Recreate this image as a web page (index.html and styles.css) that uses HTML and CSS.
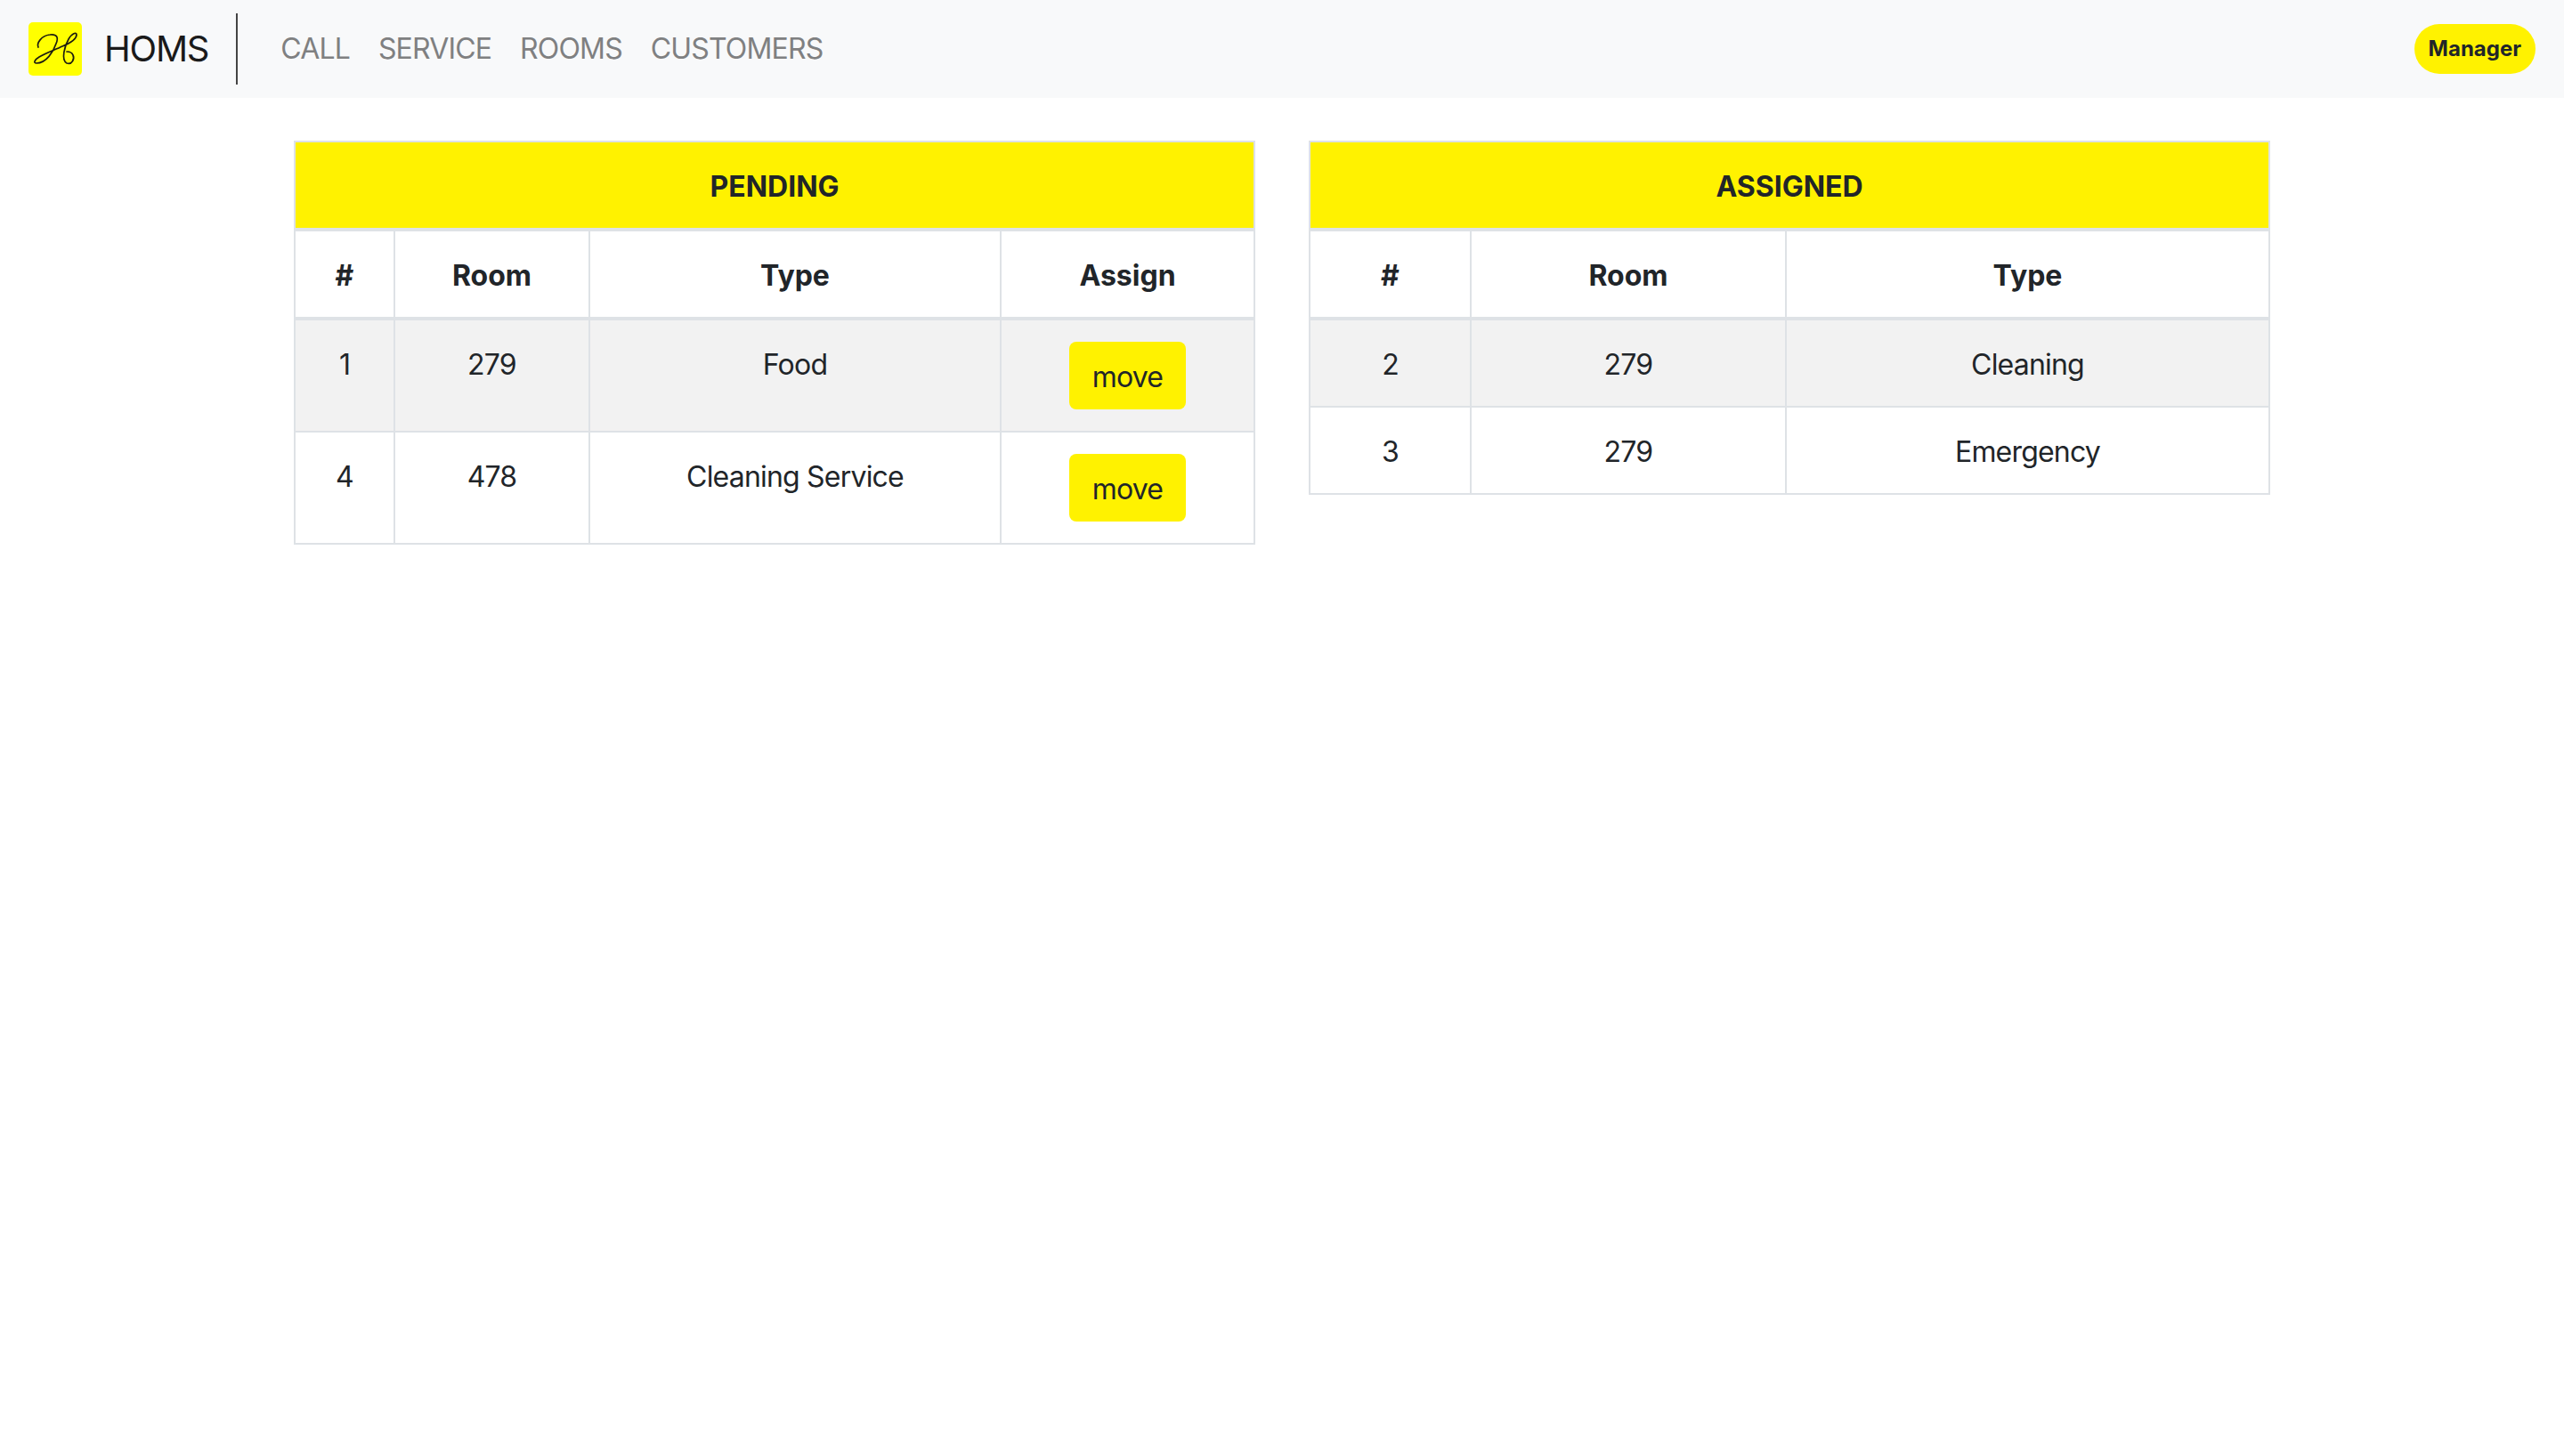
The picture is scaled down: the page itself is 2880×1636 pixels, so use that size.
FILE: index.html
```html
<!DOCTYPE html>
<html lang="en">
<head>
  <meta charset="UTF-8">
  <meta name="viewport" content="width=device-width, initial-scale=1.0">
  <title>HOMS</title>
  <link rel="stylesheet" href="styles.css">
</head>
<body>
  <nav class="navbar">
    <a class="brand" href="#">
      <svg class="logo" viewBox="0 0 60 60" aria-hidden="true">
        <rect width="60" height="60" rx="5" fill="#ffff00"/>
        <path d="M11 28C9 24 14 15 24 14C32 13 34 17 31 24C28 33 20 46 9 46C5 46 7 42 12 39C20 34 30 31 38 27C43 25 54 20 54 14C54 11 49 12 45 19C41 26 36 42 43 46C49 48 52 41 50 37C49 34 46 33 43 33" fill="none" stroke="#1c1c10" stroke-width="1.7" stroke-linecap="round"/>
      </svg>
      <span class="brand-name">HOMS</span>
    </a>
    <div class="nav-links">
      <a href="#">CALL</a>
      <a href="#">SERVICE</a>
      <a href="#">ROOMS</a>
      <a href="#">CUSTOMERS</a>
    </div>
    <span class="role-badge">Manager</span>
  </nav>

  <main class="boards">
    <table class="board">
      <colgroup>
        <col class="p-num"><col class="p-room"><col class="p-type"><col class="p-assign">
      </colgroup>
      <thead>
        <tr><th class="board-title" colspan="4">PENDING</th></tr>
        <tr><th>#</th><th>Room</th><th>Type</th><th>Assign</th></tr>
      </thead>
      <tbody>
        <tr>
          <td>1</td><td>279</td><td>Food</td>
          <td class="action-cell"><button class="move-btn">move</button></td>
        </tr>
        <tr>
          <td>4</td><td>478</td><td>Cleaning Service</td>
          <td class="action-cell"><button class="move-btn">move</button></td>
        </tr>
      </tbody>
    </table>

    <table class="board">
      <colgroup>
        <col class="a-num"><col class="a-room"><col class="a-type">
      </colgroup>
      <thead>
        <tr><th class="board-title" colspan="3">ASSIGNED</th></tr>
        <tr><th>#</th><th>Room</th><th>Type</th></tr>
      </thead>
      <tbody>
        <tr><td>2</td><td>279</td><td>Cleaning</td></tr>
        <tr><td>3</td><td>279</td><td>Emergency</td></tr>
      </tbody>
    </table>
  </main>
</body>
</html>
```

FILE: styles.css
```css
body {
  font-family: Inter, "Noto Sans", sans-serif;
  font-size: 32px;
  font-weight: 370;
  line-height: 48px;
  color: #212529;
  margin: 0;
  background-color: #fff;
}
a {
  text-decoration: none;
}

.navbar {
  display: flex;
  align-items: center;
  height: 110px;
  padding: 0 32px;
  background-color: #f8f9fa;
}
.brand {
  display: flex;
  align-items: center;
  gap: 25px;
  height: 80px;
  padding-right: 31px;
  border-right: 2px solid #444;
  color: #1a1a1a;
}
.logo {
  display: block;
  width: 60px;
  height: 60px;
}
.brand-name {
  font-size: 40px;
  letter-spacing: -1.2px;
}
.nav-links {
  display: flex;
  gap: 32px;
  margin-left: 48px;
  letter-spacing: -0.85px;
}
.nav-links a {
  color: #7f8081;
}
.role-badge {
  margin-left: auto;
  padding: 0 16px;
  font-size: 24px;
  font-weight: 700;
  line-height: 56px;
  border-radius: 28px;
  background-color: #fff200;
}

.boards {
  display: grid;
  grid-template-columns: 1080px 1080px;
  justify-content: center;
  align-items: start;
  gap: 60px;
  padding-top: 48px;
}
.board {
  width: 1078px;
  table-layout: fixed;
  border-collapse: collapse;
  text-align: center;
}
.board th,
.board td {
  padding: 26px 24px 22px;
  border: 2px solid #dee2e6;
  vertical-align: top;
}
.board td {
  letter-spacing: -0.8px;
}
.board th {
  font-weight: 700;
  border-bottom-width: 4px;
}
.board .board-title {
  background-color: #fff200;
}
.board tbody tr:nth-child(odd) {
  background-color: #f2f2f2;
}
.board .action-cell {
  padding: 24px;
}
.p-num { width: 112px; }
.p-room { width: 219px; }
.p-type { width: 462px; }
.p-assign { width: 285px; }
.a-num { width: 181px; }
.a-room { width: 354px; }
.a-type { width: 543px; }

.move-btn {
  font: inherit;
  letter-spacing: inherit;
  color: inherit;
  width: 131px;
  height: 76px;
  padding: 3px 0 0;
  border: none;
  border-radius: 8px;
  background-color: #fff200;
}
```
